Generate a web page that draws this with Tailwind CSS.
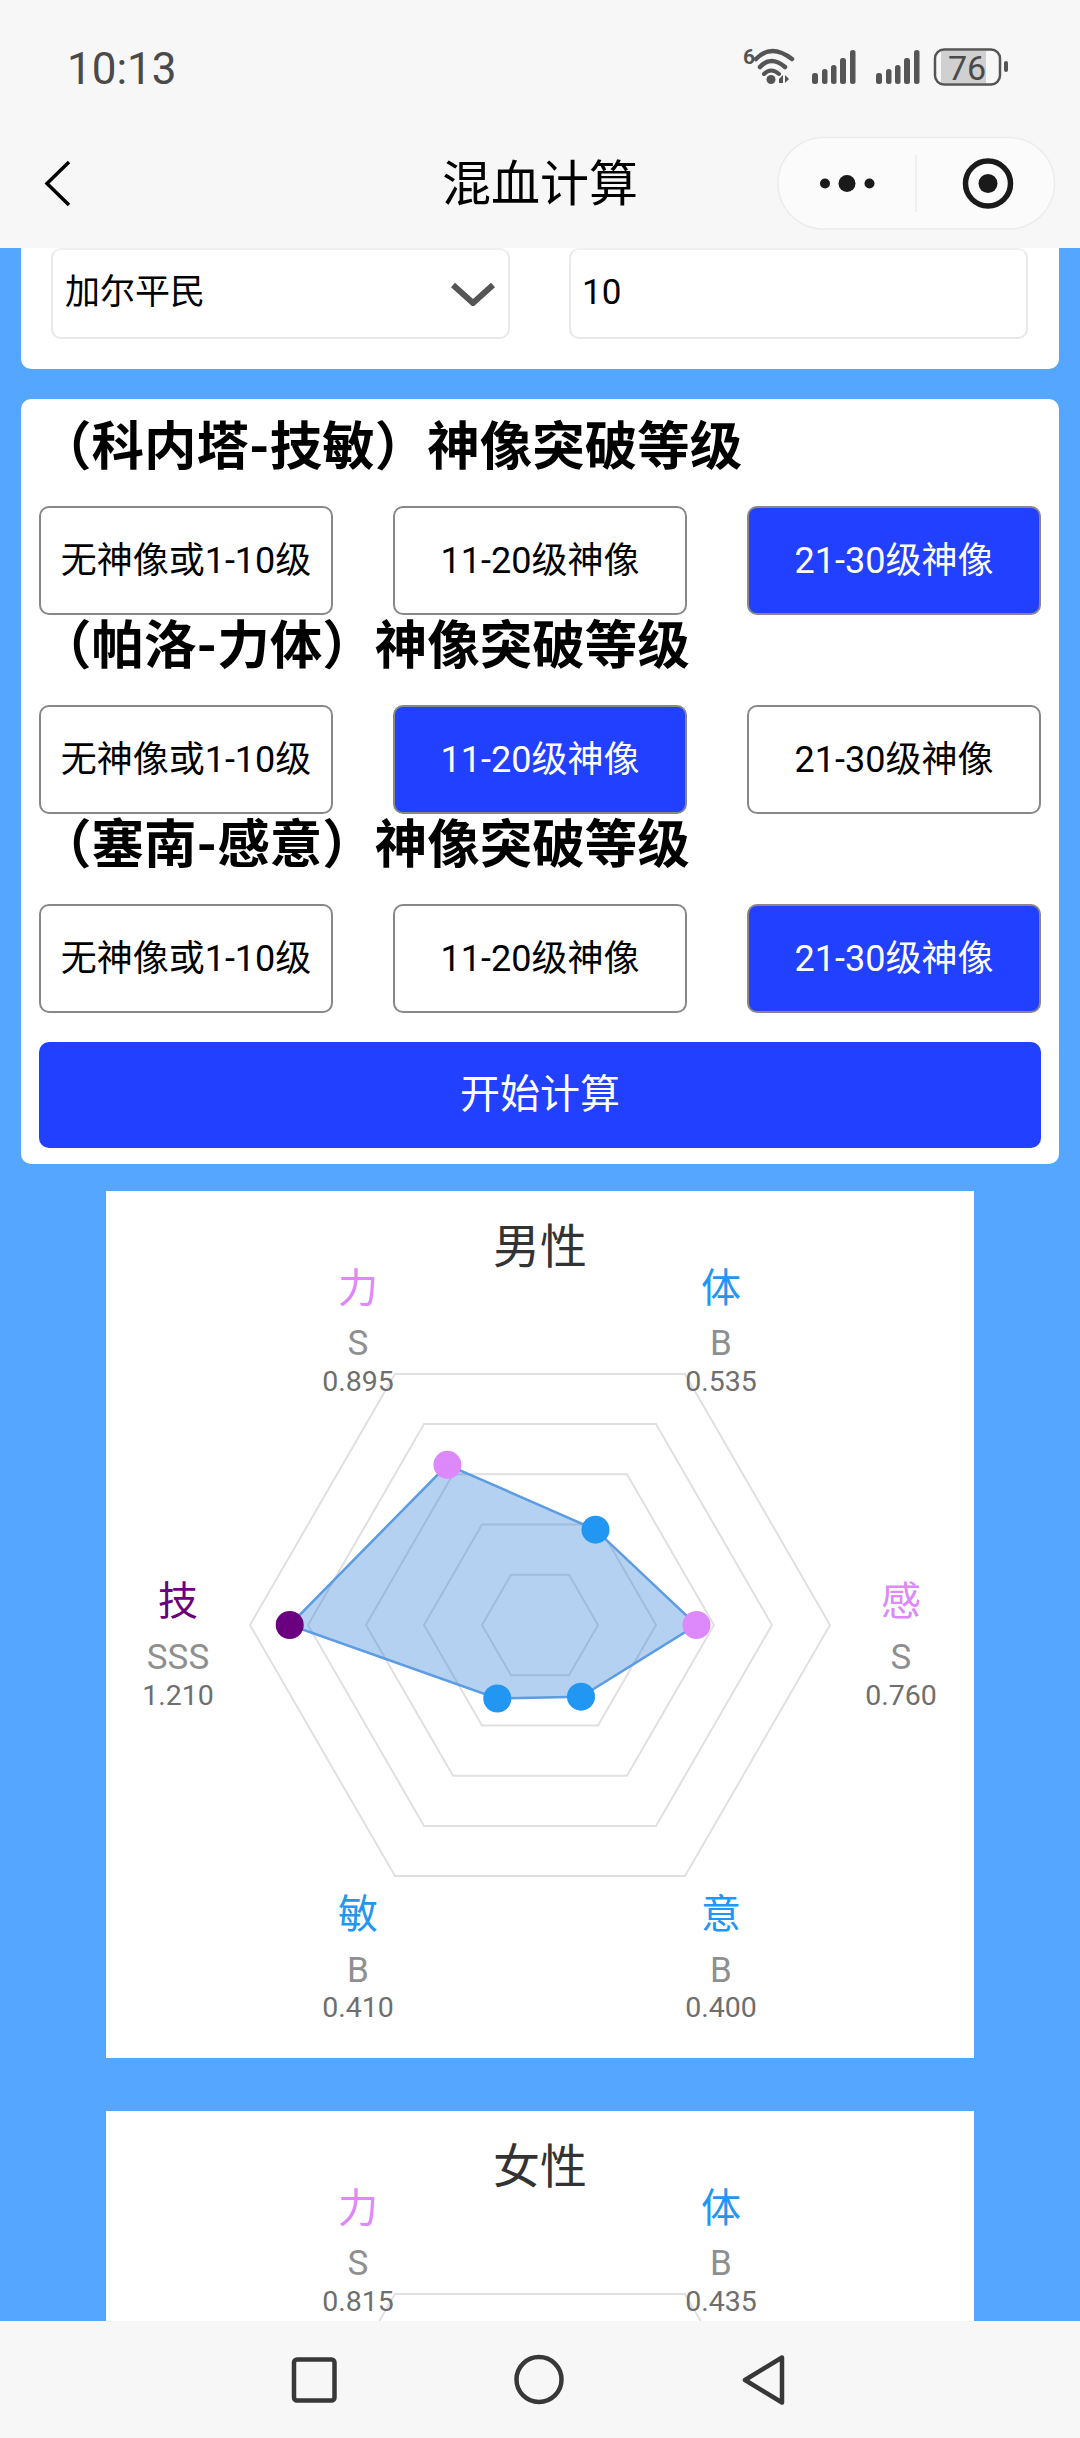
<!DOCTYPE html>
<html lang="zh-CN">
<head>
  <meta charset="UTF-8" />
  <meta name="viewport" content="width=device-width, initial-scale=1.0"/>
  <title>混血计算</title>
  <script src="https://cdn.jsdelivr.net/npm/@tailwindcss/browser@4"></script>
</head>
<body class="[font-family:Roboto,'Noto_Sans_CJK_SC',sans-serif] text-black">
<div class="w-[1080px] h-[2438px] flex flex-col overflow-hidden bg-[#55a6ff]">

  <!-- 顶部状态栏 + 导航 -->
  <header class="h-[248px] shrink-0 bg-[#f7f7f7] relative">
    <div class="absolute left-[67px] top-[41px] text-[44px] leading-[56px] text-[#4a4a4a]">10:13</div>
    <svg class="absolute left-0 top-0" width="1080" height="248" viewBox="0 0 1080 248" fill="none">
      <!-- wifi -->
      <text x="749" y="64" font-size="21" font-weight="700" fill="#555" text-anchor="middle">6</text>
      <path d="M756 59 Q771 43 792 59" stroke="#555" stroke-width="4.500" stroke-linecap="round"/>
      <path d="M760 67 Q771 55 785 67" stroke="#555" stroke-width="4.500" stroke-linecap="round"/>
      <path d="M764 74 Q771 67 779 74" stroke="#555" stroke-width="4" stroke-linecap="round"/>
      <circle cx="771" cy="79.500" r="4.500" fill="#555"/>
      <path d="M779 79 l4 -4 v8 h-4z M785 75 v8 l4 -4z" fill="#555"/>
      <!-- 信号 -->
      <g fill="#555">
        <rect x="812" y="73" width="6" height="11" rx="2.500"/>
        <rect x="822" y="69" width="5.500" height="15" rx="2.500"/>
        <rect x="831" y="65" width="5.500" height="19" rx="2.500"/>
        <rect x="840" y="58" width="6" height="26" rx="2.500"/>
        <rect x="850" y="50" width="5.500" height="34" rx="2.500"/>
        <rect x="876" y="73" width="6" height="11" rx="2.500"/>
        <rect x="886" y="69" width="5.500" height="15" rx="2.500"/>
        <rect x="895" y="65" width="5.500" height="19" rx="2.500"/>
        <rect x="904" y="58" width="6" height="26" rx="2.500"/>
        <rect x="914" y="50" width="5.500" height="34" rx="2.500"/>
      </g>
      <!-- 电池 -->
      <rect x="941" y="51" width="45" height="32" fill="#d0d0d0"/>
      <rect x="935" y="49.500" width="65" height="35" rx="9" stroke="#555" stroke-width="2.500"/>
      <rect x="1004" y="61" width="4" height="11" rx="2" fill="#555"/>
      <text x="967" y="80" font-size="34" fill="#4a4a4a" text-anchor="middle">76</text>
      <!-- 返回 -->
      <path d="M69 162 L47 183.500 L69 205" stroke="#000" stroke-width="3.500"/>
      <!-- 胶囊按钮 -->
      <rect x="778" y="137.500" width="276.500" height="91.500" rx="45.700" fill="#fbfbfb" stroke="#ececec" stroke-width="1.500"/>
      <circle cx="825" cy="183.500" r="5" fill="#1a1a1a"/>
      <circle cx="847" cy="183.500" r="8.500" fill="#1a1a1a"/>
      <circle cx="869.500" cy="183.500" r="5" fill="#1a1a1a"/>
      <path d="M916 155 V212" stroke="#ececec" stroke-width="1.500"/>
      <circle cx="988" cy="183.500" r="22.500" stroke="#1a1a1a" stroke-width="5.500"/>
      <circle cx="988" cy="183.500" r="9.500" fill="#1a1a1a"/>
    </svg>
    <h1 class="absolute inset-x-0 top-[154px] text-center text-[49px] leading-[62px] font-normal">混血计算</h1>
  </header>

  <!-- 内容区 -->
  <main class="flex-1 min-h-0 overflow-hidden px-[21px]">
    <section class="bg-white rounded-b-[10px] h-[121px] flex justify-between pl-[30px] pr-[31px]">
      <div class="w-[459px] h-[91px] border-2 border-[#e8e8e8] border-t-[#f0f0f0] rounded-[10px] flex items-center justify-between pl-[12px] pr-[12px] text-[35px]">
        <span>加尔平民</span>
        <svg width="46" height="24" viewBox="0 0 46 24" fill="none"><path d="M3 3 L23 21 L43 3" stroke="#555" stroke-width="6"/></svg>
      </div>
      <div class="w-[459px] h-[91px] border-2 border-[#e8e8e8] border-t-[#f0f0f0] rounded-[10px] flex items-center pl-[11px] text-[35px]">10</div>
    </section>

    <section class="mt-[30px] bg-white rounded-[10px] px-[18px] pt-[17px] pb-[16px]">
      <h2 class="text-[52.500px] leading-[62px] font-bold mb-[28px]">（科内塔-技敏）神像突破等级</h2>
      <div class="flex justify-between text-[36px]">
        <button class="w-[294px] h-[109px] border-2 border-[#888] rounded-[10px] bg-white">无神像或1-10级</button>
        <button class="w-[294px] h-[109px] border-2 border-[#888] rounded-[10px] bg-white">11-20级神像</button>
        <button class="w-[294px] h-[109px] border-2 border-[#888] rounded-[10px] bg-[#2240ff] text-white">21-30级神像</button>
      </div>
      <h2 class="text-[52.500px] leading-[62px] font-bold mb-[28px]">（帕洛-力体）神像突破等级</h2>
      <div class="flex justify-between text-[36px]">
        <button class="w-[294px] h-[109px] border-2 border-[#888] rounded-[10px] bg-white">无神像或1-10级</button>
        <button class="w-[294px] h-[109px] border-2 border-[#888] rounded-[10px] bg-[#2240ff] text-white">11-20级神像</button>
        <button class="w-[294px] h-[109px] border-2 border-[#888] rounded-[10px] bg-white">21-30级神像</button>
      </div>
      <h2 class="text-[52.500px] leading-[62px] font-bold mb-[28px]">（塞南-感意）神像突破等级</h2>
      <div class="flex justify-between text-[36px]">
        <button class="w-[294px] h-[109px] border-2 border-[#888] rounded-[10px] bg-white">无神像或1-10级</button>
        <button class="w-[294px] h-[109px] border-2 border-[#888] rounded-[10px] bg-white">11-20级神像</button>
        <button class="w-[294px] h-[109px] border-2 border-[#888] rounded-[10px] bg-[#2240ff] text-white">21-30级神像</button>
      </div>
      <button class="block w-full h-[106px] mt-[29px] rounded-[10px] bg-[#2240ff] text-white text-[40px]">开始计算</button>
    </section>

    <!-- 男性雷达图 -->
    <section class="w-[868px] h-[867px] mx-auto mt-[27px] bg-white">
      <svg width="868" height="867" viewBox="106 1191.500 868 867" fill="none" text-anchor="middle">
        <g stroke="#e0e0e0" stroke-width="2">
          <polygon points="830,1625.500 685,1374.400 395,1374.400 250,1625.500 395,1876.600 685,1876.600"/>
          <polygon points="772,1625.500 656,1424.600 424,1424.600 308,1625.500 424,1826.400 656,1826.400"/>
          <polygon points="714,1625.500 627,1474.800 453,1474.800 366,1625.500 453,1776.200 627,1776.200"/>
          <polygon points="656,1625.500 598,1525 482,1525 424,1625.500 482,1726 598,1726"/>
          <polygon points="598,1625.500 569,1575.300 511,1575.300 482,1625.500 511,1675.700 569,1675.700"/>
        </g>
        <polygon points="447.400,1465.300 595.500,1530.200 696.500,1625.500 581,1697.200 497.300,1699 289.700,1625.500" fill="#1c74d4" fill-opacity="0.33" stroke="#5b9ce2" stroke-width="2.500"/>
        <circle cx="447.400" cy="1465.300" r="14" fill="#dd88fb"/>
        <circle cx="595.500" cy="1530.200" r="14" fill="#2196f3"/>
        <circle cx="696.500" cy="1625.500" r="14" fill="#dd88fb"/>
        <circle cx="581" cy="1697.200" r="14" fill="#2196f3"/>
        <circle cx="497.300" cy="1699" r="14" fill="#2196f3"/>
        <circle cx="289.700" cy="1625.500" r="14" fill="#6a0080"/>

        <text x="540" y="1247" font-size="47" fill="#333" dominant-baseline="central">男性</text>

        <text x="358" y="1289" font-size="40" fill="#dd88fb" dominant-baseline="central">力</text>
        <text x="358" y="1344" font-size="35" fill="#8f8f8f" dominant-baseline="central">S</text>
        <text x="358" y="1382" font-size="28.500" fill="#6e6e6e" dominant-baseline="central">0.895</text>

        <text x="721" y="1289" font-size="40" fill="#2196f3" dominant-baseline="central">体</text>
        <text x="721" y="1344" font-size="35" fill="#8f8f8f" dominant-baseline="central">B</text>
        <text x="721" y="1382" font-size="28.500" fill="#6e6e6e" dominant-baseline="central">0.535</text>

        <text x="178" y="1602" font-size="40" fill="#6a0080" dominant-baseline="central">技</text>
        <text x="178" y="1658" font-size="35" fill="#8f8f8f" dominant-baseline="central">SSS</text>
        <text x="178" y="1696" font-size="28.500" fill="#6e6e6e" dominant-baseline="central">1.210</text>

        <text x="901" y="1602" font-size="40" fill="#dd88fb" dominant-baseline="central">感</text>
        <text x="901" y="1658" font-size="35" fill="#8f8f8f" dominant-baseline="central">S</text>
        <text x="901" y="1696" font-size="28.500" fill="#6e6e6e" dominant-baseline="central">0.760</text>

        <text x="358" y="1915" font-size="40" fill="#2196f3" dominant-baseline="central">敏</text>
        <text x="358" y="1971" font-size="35" fill="#8f8f8f" dominant-baseline="central">B</text>
        <text x="358" y="2008" font-size="28.500" fill="#6e6e6e" dominant-baseline="central">0.410</text>

        <text x="721" y="1915" font-size="40" fill="#2196f3" dominant-baseline="central">意</text>
        <text x="721" y="1971" font-size="35" fill="#8f8f8f" dominant-baseline="central">B</text>
        <text x="721" y="2008" font-size="28.500" fill="#6e6e6e" dominant-baseline="central">0.400</text>
      </svg>
    </section>

    <!-- 女性雷达图 -->
    <section class="w-[868px] h-[867px] mx-auto mt-[53px] bg-white">
      <svg width="868" height="867" viewBox="106 1191.500 868 867" fill="none" text-anchor="middle">
        <polygon points="830,1625.500 685,1374.400 395,1374.400 250,1625.500 395,1876.600 685,1876.600" stroke="#e0e0e0" stroke-width="2"/>
        <text x="540" y="1247" font-size="47" fill="#333" dominant-baseline="central">女性</text>
        <text x="358" y="1289" font-size="40" fill="#dd88fb" dominant-baseline="central">力</text>
        <text x="358" y="1344" font-size="35" fill="#8f8f8f" dominant-baseline="central">S</text>
        <text x="358" y="1382" font-size="28.500" fill="#6e6e6e" dominant-baseline="central">0.815</text>
        <text x="721" y="1289" font-size="40" fill="#2196f3" dominant-baseline="central">体</text>
        <text x="721" y="1344" font-size="35" fill="#8f8f8f" dominant-baseline="central">B</text>
        <text x="721" y="1382" font-size="28.500" fill="#6e6e6e" dominant-baseline="central">0.435</text>
      </svg>
    </section>
  </main>

  <!-- 底部导航 -->
  <footer class="h-[117px] shrink-0 bg-[#f7f7f7]">
    <svg width="1080" height="117" viewBox="0 2321 1080 117" fill="none" stroke="#383838" stroke-width="4.500" stroke-linejoin="round">
      <rect x="294" y="2359.500" width="40.500" height="41" rx="3"/>
      <circle cx="539" cy="2379.500" r="22.500"/>
      <path d="M782 2357.500 L745 2380 L782 2402.500 Z"/>
    </svg>
  </footer>
</div>
</body>
</html>
